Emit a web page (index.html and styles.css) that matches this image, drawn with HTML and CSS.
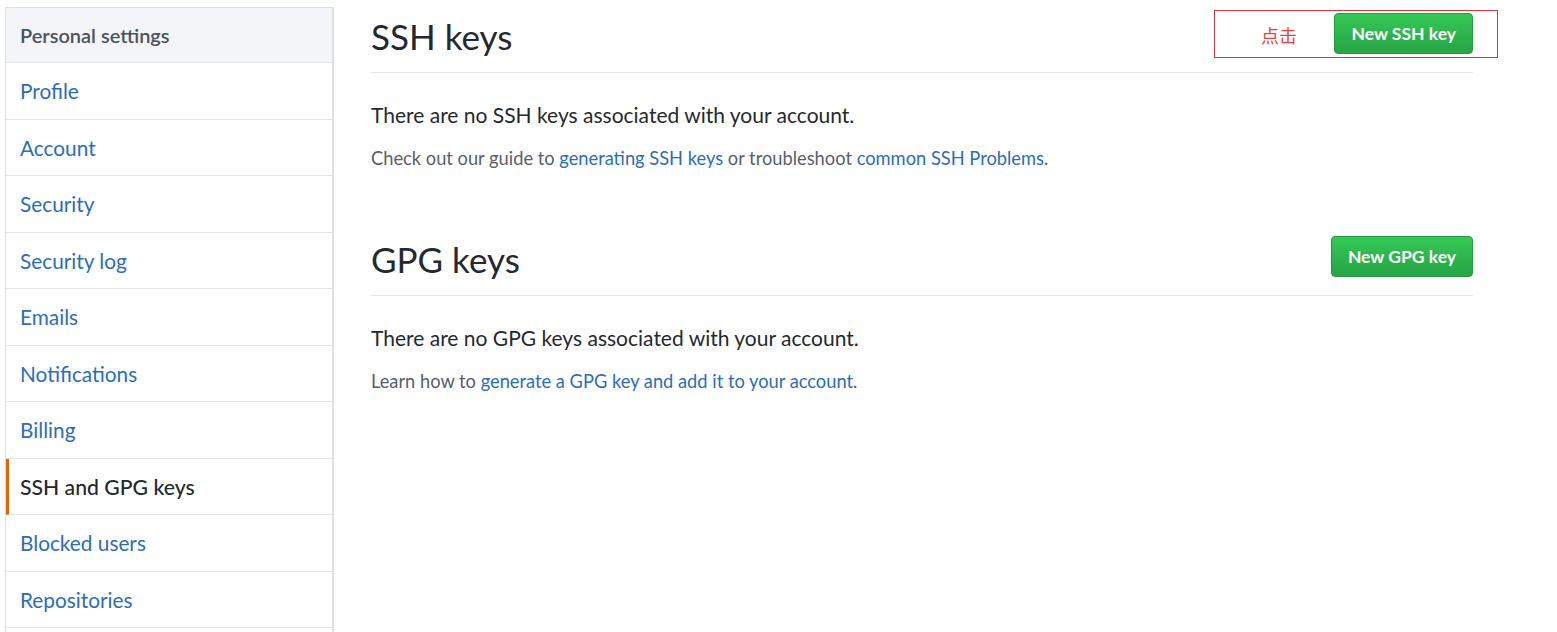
FILE: index.html
```html
<!DOCTYPE html>
<html lang="en">
<head>
    <meta charset="utf-8" />
    <title>SSH and GPG keys</title>
    <link rel="stylesheet" href="styles.css">
</head>
<body>
<div class="page">
    <nav class="menu">
        <h3 class="menu-heading">Personal settings</h3>
        <a class="menu-item" href="#">Profile</a>
        <a class="menu-item" href="#">Account</a>
        <a class="menu-item" href="#">Security</a>
        <a class="menu-item" href="#">Security log</a>
        <a class="menu-item" href="#">Emails</a>
        <a class="menu-item" href="#">Notifications</a>
        <a class="menu-item" href="#">Billing</a>
        <a class="menu-item selected" href="#">SSH and GPG keys</a>
        <a class="menu-item" href="#">Blocked users</a>
        <a class="menu-item" href="#">Repositories</a>
        <div class="menu-item empty"></div>
    </nav>

    <div class="main">
        <div class="subhead">
            <h2 class="subhead-title">SSH keys</h2>
            <a class="btn" href="#">New SSH key</a>
            <div class="note">
                <span class="note-text">点击</span>
            </div>
        </div>
        <p class="lead">There are no SSH keys associated with your account.</p>
        <p class="help">Check out our guide to <a href="#">generating SSH keys</a> or troubleshoot <a href="#">common SSH Problems</a>.</p>

        <div class="subhead second">
            <h2 class="subhead-title">GPG keys</h2>
            <a class="btn" href="#">New GPG key</a>
        </div>
        <p class="lead">There are no GPG keys associated with your account.</p>
        <p class="help">Learn how to <a href="#">generate a GPG key and add it to your account</a>.</p>
    </div>
</div>
</body>
</html>
```

FILE: styles.css
```css
body {
    margin: 0;
    background: #fff;
    font-family: Lato, "Open Sans", sans-serif;
    color: #24292e;
    overflow: hidden;
}

a, a:visited { color: #2b6db9; text-decoration: none; }

.page {
    display: flex;
    align-items: flex-start;
    padding: 7px 0 0 5px;
    gap: 37px;
}

/* left menu */
.menu {
    width: 329px;
    box-sizing: border-box;
    border: 1px solid #dcdfe3;
    border-right-width: 2px;
    display: flex;
    flex-direction: column;
    flex-shrink: 0;
}

.menu-heading {
    margin: 0;
    height: 54px;
    line-height: 55px;
    padding-left: 14px;
    background-color: #f3f5f8;
    color: #4c535a;
    font-size: 20px;
    font-weight: 600;
    border-bottom: 1px solid #e1e4e8;
}

.menu-item {
    display: block;
    height: 55.5px;
    line-height: 56px;
    padding-left: 14px;
    font-size: 20.8px;
    border-bottom: 1px solid #e1e4e8;
}

.menu-item.selected {
    color: #24292e;
    padding-left: 11px;
    border-left: 3px solid #e36209;
    font-size: 21.2px;
    font-weight: 500;
}

/* content */
.main {
    width: 1102px;
}

.subhead {
    position: relative;
    display: flex;
    justify-content: space-between;
    align-items: flex-start;
    height: 65px;
    border-bottom: 1px solid #e1e4e8;
}

.subhead.second {
    margin-top: 59px;
}

.subhead-title {
    margin: 0;
    font-size: 35px;
    font-weight: 400;
    line-height: 59px;
}

.btn, .btn:visited {
    margin-top: 6px;
    box-sizing: border-box;
    height: 41px;
    line-height: 39px;
    padding: 0 16px;
    color: #fff;
    font-size: 17.5px;
    font-weight: 700;
    border: 1px solid #23993f;
    border-radius: 4px;
    background-image: linear-gradient(#35c956, #28a745 90%);
}

.note {
    position: absolute;
    left: 843px;
    top: 3px;
    width: 284px;
    height: 48px;
    box-sizing: border-box;
    border: 1px solid #d9363e;
    pointer-events: none;
}

.note-text {
    position: absolute;
    left: 46px;
    top: 11px;
    color: #e0453e;
    font-family: "Noto Sans CJK SC", sans-serif;
    font-size: 18px;
}

.lead {
    margin: 27px 0 0;
    font-size: 21px;
    line-height: 30px;
}

.help {
    margin: 15px 0 0;
    font-size: 18.3px;
    line-height: 26px;
    color: #586069;
}
```
